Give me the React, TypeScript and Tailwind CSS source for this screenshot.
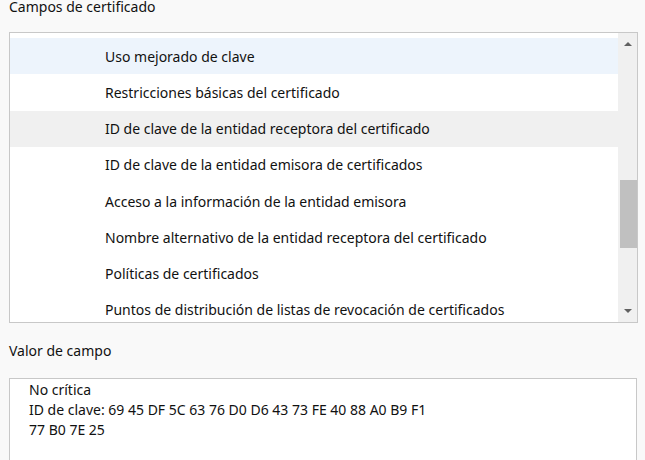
import React from 'react';

const fields = [
  'Uso mejorado de clave',
  'Restricciones básicas del certificado',
  'ID de clave de la entidad receptora del certificado',
  'ID de clave de la entidad emisora de certificados',
  'Acceso a la información de la entidad emisora',
  'Nombre alternativo de la entidad receptora del certificado',
  'Políticas de certificados',
  'Puntos de distribución de listas de revocación de certificados',
];

const rowBg = (i: number) => {
  if (i === 0) return 'bg-[#edf4fc]';
  if (i === 2) return 'bg-[#f0f0f0]';
  return 'bg-white';
};

const App: React.FC = () => {
  return (
    <div
      className="flex h-[460px] w-[645px] flex-col overflow-hidden bg-[#f9f9f9] pl-[9px] text-[14px] text-[#111]"
      style={{ fontFamily: '"Noto Sans", "Open Sans", sans-serif' }}
    >
      <div className="flex h-[32px] shrink-0 items-start pt-[1px] leading-[12px]">
        Campos de certificado
      </div>

      {/* list of fields */}
      <div className="flex h-[291px] w-[629px] shrink-0 border border-[#c8c8c8] bg-white">
        <div className="flex flex-1 flex-col overflow-hidden pt-[5px]">
          {fields.map((f, i) => (
            <div
              key={f}
              className={`flex h-[36.25px] shrink-0 items-center pl-[95px] whitespace-nowrap ${rowBg(i)}`}
            >
              {f}
            </div>
          ))}
        </div>
        {/* scrollbar */}
        <div className="flex w-[19px] flex-col items-center bg-[#f0f0f0] pb-[9px] pt-[9px]">
          <div className="h-0 w-0 border-x-[4px] border-b-[4px] border-x-transparent border-b-[#606060]" />
          <div className="mt-[134px] h-[68px] w-[17px] self-end bg-[#c0c0c0]" />
          <div className="flex-1" />
          <div className="h-0 w-0 border-x-[4px] border-t-[4px] border-x-transparent border-t-[#606060]" />
        </div>
      </div>

      <div className="flex h-[55px] shrink-0 items-center leading-[14px]">Valor de campo</div>

      <div className="h-[120px] w-[628px] shrink-0 border border-[#c8c8c8] bg-white pl-[19px] pt-[1px] leading-[20px]">
        <div>No crítica</div>
        <div>ID de clave: 69 45 DF 5C 63 76 D0 D6 43 73 FE 40 88 A0 B9 F1</div>
        <div>77 B0 7E 25</div>
      </div>
    </div>
  );
};

export default App;
